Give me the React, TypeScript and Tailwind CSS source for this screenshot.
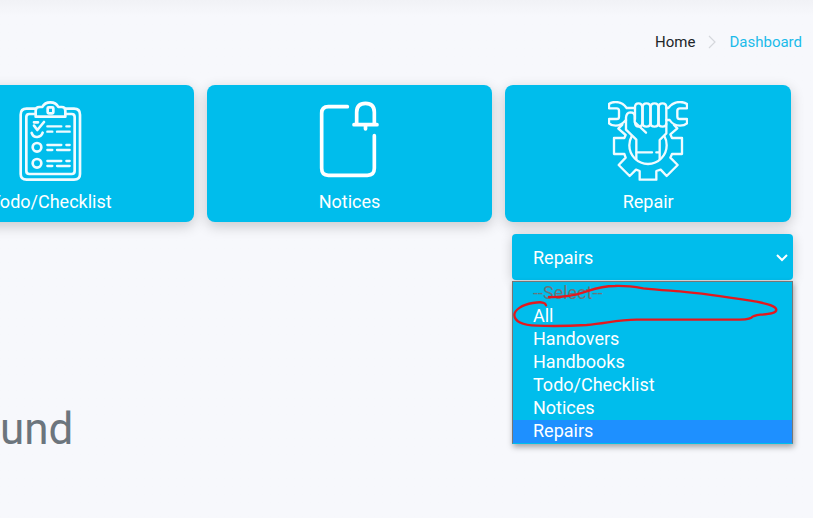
import type { ReactNode } from "react";

const OPTIONS = ["Handovers", "Handbooks", "Todo/Checklist", "Notices"];

function ChecklistIcon() {
  const rows = [
    [103, 119],
    [159, 174],
    [207, 222],
  ];
  return (
    <svg aria-hidden="true" viewBox="5 27 240 240" className="size-20" fill="none" stroke="#f0fbff" strokeWidth="8" strokeLinecap="round" strokeLinejoin="round">
      <path d="M77 50H52Q34 50 34 68V246Q34 263 52 263H194Q212 263 212 246V68Q212 50 194 50H170" />
      <path d="M77 66H60Q51 66 51 75V237Q51 246 60 246H187Q196 246 196 237V75Q196 66 187 66H170" />
      <path d="M79 74V56Q79 45 90 45H99Q106 31 123 31Q140 31 147 45H157Q168 45 168 56V74Z" />
      <rect x="115" y="46" width="17" height="18" rx="3" />
      <path d="M74 101L84 114L104 90M74 91H86M67 123Q72 136 84 135Q96 134 100 122" />
      <circle cx="83" cy="166" r="13" />
      <circle cx="83" cy="214" r="13" />
      {rows.map(([top, low]) => (
        <path key={top} strokeWidth="7" d={`M114 ${top}H156M171 ${top}H181M114 ${low}H129M143 ${low}H181`} />
      ))}
    </svg>
  );
}

function NoticeIcon() {
  return (
    <svg aria-hidden="true" viewBox="0 27 240 240" className="size-20" fill="none" stroke="white" strokeWidth="11" strokeLinecap="round" strokeLinejoin="round">
      <path d="M115 44H58Q38 44 38 64V229Q38 250 58 250H175Q196 250 196 229V131" />
      <path d="M143 97V61Q143 34 169.500 34Q196 34 196 61V97M135 98H204M169.500 101V111" />
    </svg>
  );
}

function RepairIcon() {
  return (
    <svg aria-hidden="true" viewBox="24 27 240 240" className="size-20" fill="none" stroke="#f0fbff" strokeWidth="7" strokeLinejoin="round" strokeLinecap="round">
      <path d="M104 48H80Q68 30 46 30Q34 30 27 36V49H50Q57 49 57 56V74Q57 81 50 81H27V94Q34 101 47 101Q63 101 78 84" />
      <path d="M199 48H205Q218 30 240 30Q253 30 261 36V49H240Q232 49 232 56V74Q232 81 240 81H261V94Q253 101 240 101Q219 100 209 84H199" />
      <path d="M105 82V46Q105 34 115.500 34Q126 34 127 46V94Q126 104 116 104Q106 104 105 92" />
      <path d="M128 94V45Q128 34 139.500 34Q151 34 151 45V94Q151 104 139.500 104Q128 104 128 94Z" />
      <path d="M152 94V45Q152 34 163.500 34Q175 34 175 45V94Q175 104 163.500 104Q152 104 152 94Z" />
      <path d="M176 94V45Q176 34 187.500 34Q199 34 199 45V94Q199 104 187.500 104Q176 104 176 94Z" />
      <path d="M138 122L104 90V73Q104 61 91 61Q79 62 78 77V113L109 143V202M199 96V124L179 144V202" />
      <path d="M95 133Q88 145 88 160A56 56 0 0 0 200 160Q200 144 193 132" />
      <path d="M110 181H156M169 181H176" />
      <path d="M67 98L55 110L77 129L73 138H42V186H73L77 197L56 219L89 252L108 233L119 237V263H169V237L182 233L200 252L233 219L211 197L216 186H246V138H216L211 127L232 109L222 99" />
    </svg>
  );
}

function Card({ label, children }: { label: string; children: ReactNode }) {
  return (
    <button type="button" className="flex flex-col items-center gap-2 rounded-lg bg-[#00bdec] pt-4 pb-2 text-lg/[25px] text-white shadow-[0_4px_14px_rgba(0,0,0,0.2)]">
      {children}
      <span>{label}</span>
    </button>
  );
}

export default function App() {
  return (
    <div className="min-h-screen overflow-hidden bg-[#f7f8fc] bg-linear-to-b from-[#f1f2f6] to-[#f7f8fc] to-[16px] font-['Roboto','Liberation_Sans',sans-serif]">
      <nav aria-label="Breadcrumb" className="flex items-center justify-end gap-3 pt-8 pr-[11px] text-[15px]/5">
        <a href="#home" className="text-[#212529]">Home</a>
        <svg aria-hidden="true" viewBox="0 0 10 14" className="h-3.5 w-2.5" fill="none" stroke="#d5d7dc" strokeWidth="1.2">
          <path d="M2 1L8 7L2 13" />
        </svg>
        <a href="#dashboard" aria-current="page" className="text-[#1bbbea]">Dashboard</a>
      </nav>

      <main className="pt-[33px]">
        <div className="mr-[22px] -ml-[92px] grid grid-cols-3 gap-[13px]">
          <Card label="Todo/Checklist"><ChecklistIcon /></Card>
          <Card label="Notices"><NoticeIcon /></Card>
          <Card label="Repair"><RepairIcon /></Card>
        </div>

        <div className="relative mt-3 mr-5 ml-auto w-[281px] text-lg/[21px]">
          <select aria-label="Category" defaultValue="Repairs" className="block h-[46px] w-full appearance-none rounded bg-[#00bdec] px-[21px] text-white shadow-[0_2px_12px_rgba(0,0,0,0.2)]">
            <option>Repairs</option>
          </select>
          <svg aria-hidden="true" viewBox="0 0 12 8" className="pointer-events-none absolute top-5 right-[5px] h-2 w-3" fill="none" stroke="white" strokeWidth="2">
            <path d="M1 1L6 6L11 1" />
          </svg>
          <ul role="listbox" aria-label="Category options" className="absolute top-[47px] left-0 w-full border border-[#767676] border-b-[#00bdec] bg-[#00bdec] text-white shadow-[1px_3px_6px_rgba(0,0,0,0.35)]">
            <li role="option" aria-selected="false" aria-disabled="true" className="px-5 pb-0.5 text-[#6d7478]">--Select--</li>
            <li role="option" aria-selected="false" className="px-5 pb-0.5">All</li>
            {OPTIONS.map((name) => (
              <li key={name} role="option" aria-selected="false" className="px-5 pb-0.5">{name}</li>
            ))}
            <li role="option" aria-selected="true" className="bg-[#1e90ff] px-5 pb-0.5">Repairs</li>
          </ul>
          <svg aria-hidden="true" viewBox="36 27 843 300" className="pointer-events-none absolute top-0 left-0 h-[100px] w-[281px]" fill="none" stroke="#e3191e" strokeWidth="7" strokeLinecap="round" strokeLinejoin="round">
            <path d="M138 241C136 229 116 231 98 234C65 239 43 256 43 270C44 288 66 301 110 302C160 304 210 303 260 300C320 295 350 285 410 284H700C728 284 744 284 754 278C760 272 768 271 782 269C812 267 829 264 829 254C828 243 803 237 770 230C700 219 620 206 540 199C500 196 465 194 430 190C400 185 375 182 345 183C300 183 280 193 248 203C215 214 185 217 147 216" />
          </svg>
        </div>

        <h1 className="mt-[123px] text-[44px]/[52px] text-[#6c757d]">und</h1>
      </main>
    </div>
  );
}
